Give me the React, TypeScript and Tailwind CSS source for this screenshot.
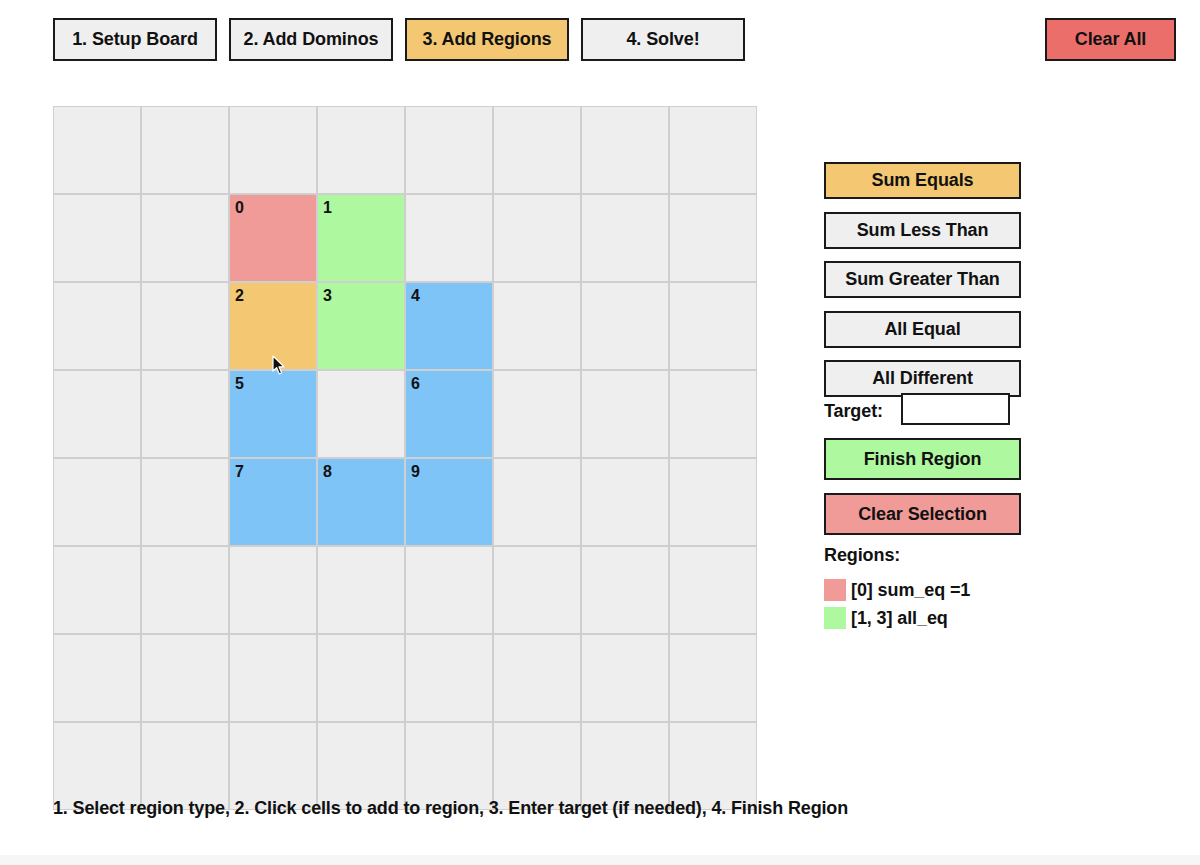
import { useState } from "react";

type Cell = { id: number; color: string } | null;

const RED = "bg-[#f09b98]";
const GREEN = "bg-[#aef99f]";
const ORANGE = "bg-[#f4c872]";
const BLUE = "bg-[#7fc4f6]";

// row, col -> numbered cell
const cells: Record<string, Cell> = {
  "1-2": { id: 0, color: RED },
  "1-3": { id: 1, color: GREEN },
  "2-2": { id: 2, color: ORANGE },
  "2-3": { id: 3, color: GREEN },
  "2-4": { id: 4, color: BLUE },
  "3-2": { id: 5, color: BLUE },
  "3-4": { id: 6, color: BLUE },
  "4-2": { id: 7, color: BLUE },
  "4-3": { id: 8, color: BLUE },
  "4-4": { id: 9, color: BLUE },
};

const steps = ["1. Setup Board", "2. Add Dominos", "3. Add Regions", "4. Solve!"];
const regionTypes = [
  "Sum Equals",
  "Sum Less Than",
  "Sum Greater Than",
  "All Equal",
  "All Different",
];

function Cursor() {
  return (
    <svg
      className="absolute left-[42px] top-[72px]"
      width="14"
      height="21"
      viewBox="0 0 14 21"
    >
      <path
        d="M1 1 L1 16 L4.6 12.6 L7.3 19 L9.6 18 L7 11.8 L12 11.8 Z"
        fill="#111"
        stroke="#fff"
        strokeWidth="1.2"
        strokeLinejoin="round"
      />
    </svg>
  );
}

export default function App() {
  const [step, setStep] = useState(2);
  const [regionType, setRegionType] = useState(0);
  const [target, setTarget] = useState("");

  return (
    <div className="min-h-[865px] flex flex-col bg-white font-['Liberation_Sans',Arial,sans-serif] text-[#111]">
      <div className="pl-[53px] pr-[24px] pt-[18px]">
        <div className="flex items-center justify-between">
          <div className="flex gap-[12px]">
            {steps.map((s, i) => (
              <button
                key={s}
                onClick={() => setStep(i)}
                className={`w-[164px] h-[43px] border-2 border-[#1a1a1a] text-[18px] font-bold tracking-[-0.1px] ${
                  step === i ? "bg-[#f4c872]" : "bg-[#efefef]"
                }`}
              >
                {s}
              </button>
            ))}
          </div>
          <button className="w-[131px] h-[43px] border-2 border-[#1a1a1a] bg-[#ec6e6b] text-[18px] font-bold tracking-[-0.1px]">
            Clear All
          </button>
        </div>

        <div className="mt-[45px] flex gap-[67px]">
          <div className="w-[704px] shrink-0">
            <div className="grid grid-cols-[repeat(8,88px)] w-[704px]">
              {Array.from({ length: 64 }).map((_, i) => {
                const r = Math.floor(i / 8);
                const c = i % 8;
                const cell = cells[`${r}-${c}`];
                return (
                  <div
                    key={i}
                    className={`h-[88px] border border-[#cfcfcf] pl-[5px] pt-[4px] text-[16px] leading-[18px] font-bold ${
                      cell ? cell.color : "bg-[#eeeeee]"
                    } ${cell && cell.id === 2 ? "relative" : ""}`}
                  >
                    {cell ? cell.id : ""}
                    {cell && cell.id === 2 ? <Cursor /> : null}
                  </div>
                );
              })}
            </div>
            <p className="mt-[-12px] text-[18px] leading-[20px] font-bold tracking-[-0.15px] whitespace-nowrap">
              1. Select region type, 2. Click cells to add to region, 3. Enter target (if needed), 4. Finish Region
            </p>
          </div>

          <div className="mt-[56px] w-[197px] flex flex-col">
            <div className="flex flex-col gap-[12.5px]">
              {regionTypes.map((t, i) => (
                <button
                  key={t}
                  onClick={() => setRegionType(i)}
                  className={`h-[37px] border-2 border-[#1a1a1a] text-[18px] font-bold tracking-[-0.1px] ${
                    regionType === i ? "bg-[#f4c872]" : "bg-[#efefef]"
                  }`}
                >
                  {t}
                </button>
              ))}
            </div>
            <div className="mt-[-4px] flex items-center h-[32px]">
              <span className="w-[77px] text-[18px] font-bold tracking-[-0.1px] pt-[4px]">
                Target:
              </span>
              <input
                value={target}
                onChange={(e) => setTarget(e.target.value)}
                className="relative w-[109px] h-[32px] border-2 border-[#1a1a1a] bg-white px-1 outline-none"
              />
            </div>
            <button className="mt-[13px] h-[42px] border-2 border-[#1a1a1a] bg-[#aef99f] text-[18px] font-bold tracking-[-0.1px]">
              Finish Region
            </button>
            <button className="mt-[13px] h-[42px] border-2 border-[#1a1a1a] bg-[#f09b98] text-[18px] font-bold tracking-[-0.1px]">
              Clear Selection
            </button>
            <div className="mt-[10px] text-[18px] leading-[20px] font-bold tracking-[-0.1px]">
              Regions:
            </div>
            <div className="mt-[14px] flex flex-col gap-[6px]">
              <div className="flex items-center gap-[5px]">
                <span className={`w-[22px] h-[22px] ${RED}`} />
                <span className="text-[18px] leading-[22px] font-bold tracking-[-0.1px]">[0] sum_eq =1</span>
              </div>
              <div className="flex items-center gap-[5px]">
                <span className={`w-[22px] h-[22px] ${GREEN}`} />
                <span className="text-[18px] leading-[22px] font-bold tracking-[-0.1px]">[1, 3] all_eq</span>
              </div>
            </div>
          </div>
        </div>
      </div>
      <div className="flex-1" />
      <div className="h-[10px] bg-[#f6f6f6]" />
    </div>
  );
}
